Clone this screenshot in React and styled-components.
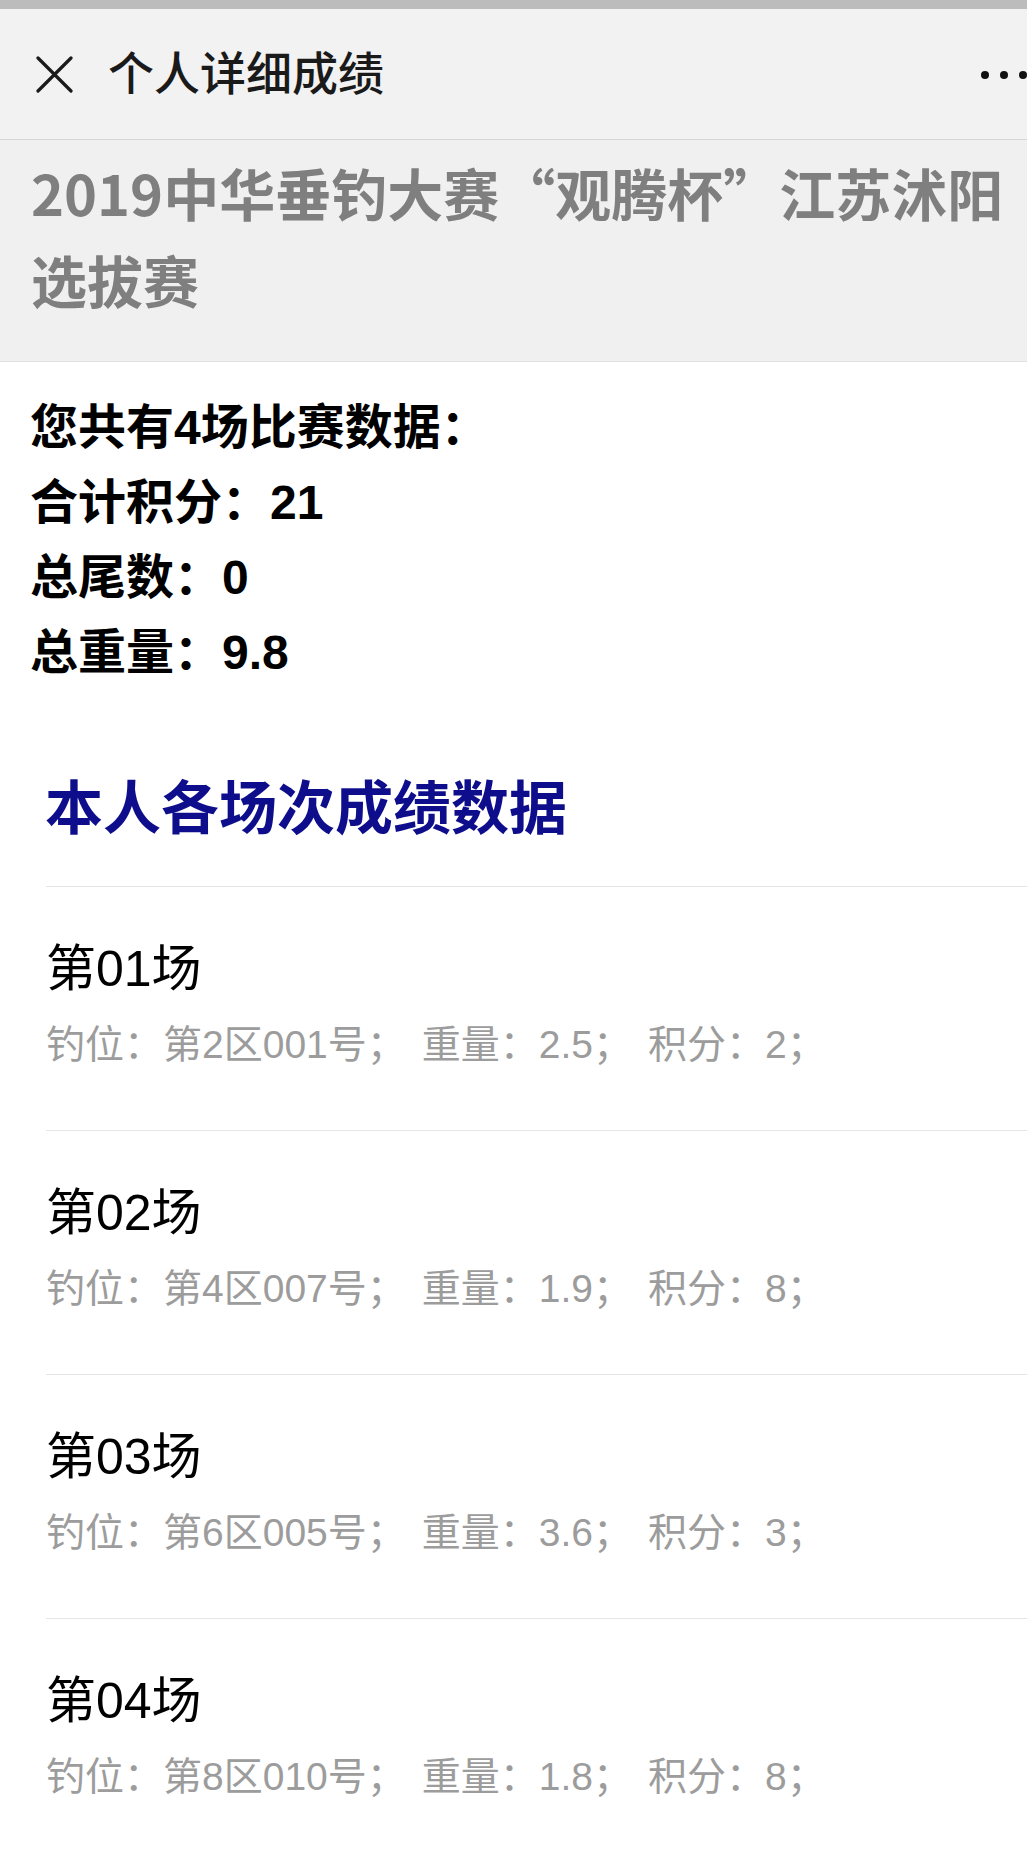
import styled, { createGlobalStyle } from "styled-components";

const GlobalStyle = createGlobalStyle`
  html, body {
    margin: 0;
    padding: 0;
    background: #fff;
  }
  body {
    font-family: "Liberation Sans", "Noto Sans CJK SC", sans-serif;
    overflow-x: hidden;
  }
`;

const rounds = [
  { name: "第01场", seat: "第2区001号", weight: "2.5", score: "2" },
  { name: "第02场", seat: "第4区007号", weight: "1.9", score: "8" },
  { name: "第03场", seat: "第6区005号", weight: "3.6", score: "3" },
  { name: "第04场", seat: "第8区010号", weight: "1.8", score: "8" },
];

function App() {
  return (
    <Page>
      <GlobalStyle />
      <StatusStrip />
      <NavBar>
        <CloseButton aria-label="关闭">
          <svg width="37" height="37" viewBox="0 0 37 37">
            <path
              d="M2 2 L35 35 M35 2 L2 35"
              stroke="#1a1a1a"
              strokeWidth="3.2"
              strokeLinecap="round"
            />
          </svg>
        </CloseButton>
        <NavTitle>个人详细成绩</NavTitle>
        <MoreDots>
          <Dot />
          <Dot />
          <Dot />
        </MoreDots>
      </NavBar>

      <Banner>
        <BannerTitle>2019中华垂钓大赛“观腾杯”江苏沭阳选拔赛</BannerTitle>
      </Banner>

      <Summary>
        <SummaryLine>您共有4场比赛数据：</SummaryLine>
        <SummaryLine>合计积分：21</SummaryLine>
        <SummaryLine>总尾数：0</SummaryLine>
        <SummaryLine>总重量：9.8</SummaryLine>
      </Summary>

      <SectionTitle>本人各场次成绩数据</SectionTitle>

      <RoundList>
        {rounds.map((r) => (
          <RoundItem key={r.name}>
            <RoundName>{r.name}</RoundName>
            <RoundDetail>
              <Field>钓位：{r.seat}；</Field>
              <Field>重量：{r.weight}；</Field>
              <Field>积分：{r.score}；</Field>
            </RoundDetail>
          </RoundItem>
        ))}
      </RoundList>
    </Page>
  );
}

const Page = styled.div`
  width: 1027px;
  min-height: 1855px;
  background: #fff;
  overflow: hidden;
`;

const StatusStrip = styled.div`
  height: 9px;
  background: #bcbcbc;
`;

const NavBar = styled.header`
  box-sizing: border-box;
  height: 131px;
  display: flex;
  align-items: center;
  padding-left: 36px;
  background: #f2f2f2;
  border-bottom: 1px solid #d6d6d6;
`;

const CloseButton = styled.div`
  width: 37px;
  height: 37px;
  display: flex;
  svg {
    display: block;
  }
`;

const NavTitle = styled.h1`
  margin: 0 0 0 35px;
  flex: 1;
  font-size: 46px;
  font-weight: 500;
  color: #1a1a1a;
  line-height: 1;
`;

const MoreDots = styled.div`
  display: flex;
  gap: 11px;
  align-items: center;
  padding-top: 2px;
`;

const Dot = styled.span`
  width: 8px;
  height: 8px;
  border-radius: 50%;
  background: #111;
`;

const Banner = styled.div`
  box-sizing: border-box;
  height: 222px;
  padding: 8px 14px 0 31px;
  background: #f0f0f0;
  border-bottom: 1px solid #e0e0e0;
`;

/* CJK font first so the curly quotes are full width like the original */
const BannerTitle = styled.h2`
  margin: 0;
  font-family: "Noto Sans CJK SC", sans-serif;
  font-size: 56px;
  line-height: 87px;
  font-weight: 700;
  color: #7f7f7f;
`;

const Summary = styled.div`
  padding: 28px 30px 0 30px;
`;

const SummaryLine = styled.p`
  margin: 0;
  font-size: 48px;
  line-height: 75px;
  font-weight: 700;
  color: #000;
`;

const SectionTitle = styled.h3`
  margin: 79px 0 0 0;
  padding: 0 0 37px 45px;
  font-size: 58px;
  line-height: 80px;
  font-weight: 700;
  color: #0e0e8c;
`;

const RoundList = styled.div`
  margin-left: 46px;
`;

const RoundItem = styled.div`
  border-top: 1px solid #e5e5e5;
  padding: 40px 0 51px 0;
`;

const RoundName = styled.div`
  font-size: 50px;
  line-height: 84px;
  font-weight: 400;
  color: #000;
`;

const RoundDetail = styled.div`
  display: flex;
  gap: 16px;
  font-size: 39px;
  line-height: 68px;
  color: #9c9c9c;
`;

const Field = styled.span`
  white-space: nowrap;
`;

export default App;
